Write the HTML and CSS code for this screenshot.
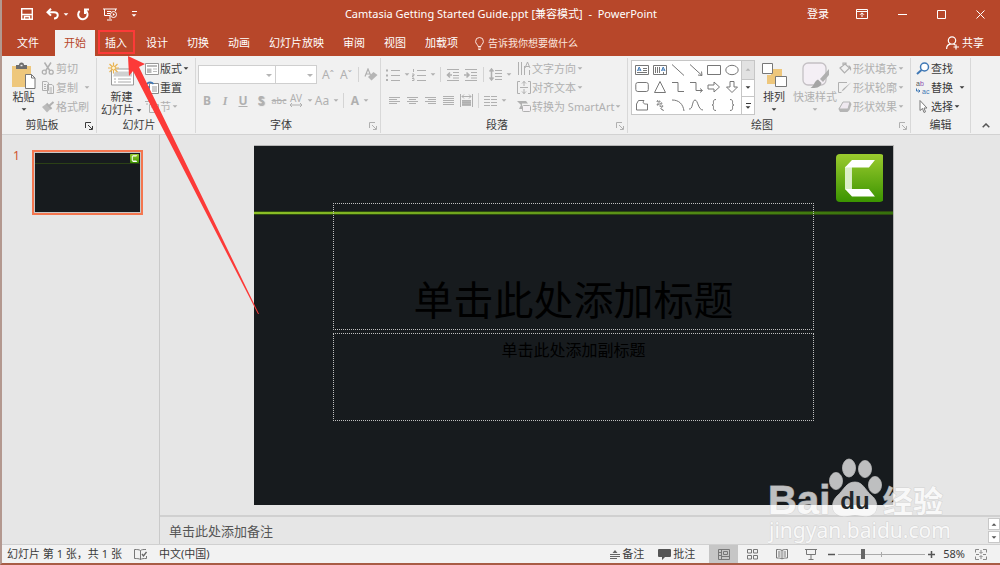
FILE: index.html
```html
<!DOCTYPE html>
<html lang="zh-CN">
<head>
<meta charset="utf-8">
<meta name="viewport" content="width=device-width, initial-scale=1">
<title>Camtasia Getting Started Guide.ppt - PowerPoint</title>
<link rel="stylesheet" href="styles.css">
</head>
<body>
<svg class="defs" aria-hidden="true">
  <defs>
    <linearGradient id="green" x1="0" y1="0" x2="0" y2="1"><stop offset="0" stop-color="#9bcb2e"/><stop offset="1" stop-color="#3b9400"/></linearGradient>
    <symbol id="launcher" viewBox="0 0 8 8"><path d="M.5 6V.5H6M3 3l4 4M7.500 4v3.500H4" fill="none" stroke="currentColor"/></symbol>
    <symbol id="camtasia" viewBox="0 0 48 48"><rect width="48" height="48" rx="4" fill="url(#green)"/><path d="M9 13l7-3v28l-7-3z" fill="#dcefc8"/><path d="M16 6h23l-6 7.500H9zM9 35h24l6 7.500H16z" fill="#fff"/></symbol>
  </defs>
</svg>
<div class="app">
  <header class="titlebar">
    <div class="qat">
      <button class="qbtn" aria-label="保存"><svg width="12" height="12" viewBox="0 0 12 12"><path d="M.7.7h10.600v10.600H.7zM.7 6.500h10.600M3.500 11V8.500h5V11" fill="none" stroke="#fff" stroke-width="1.400"/></svg></button>
      <button class="qbtn undo" aria-label="撤消"><svg width="14" height="12" viewBox="0 0 14 12"><path d="M5 .8L1.500 4.200 5 7.600M2 4.200h6c5 0 5 6.300 0 6.300" fill="none" stroke="#fff" stroke-width="2"/></svg><i class="caret"></i></button>
      <button class="qbtn" aria-label="重复"><svg width="14" height="13" viewBox="0 0 14 13"><path d="M3.700 3A4.700 4.700 0 1 0 9.500 2.600M9 6V1.500h4" fill="none" stroke="#fff" stroke-width="2"/></svg></button>
      <button class="qbtn" aria-label="从头开始"><svg width="15" height="13" viewBox="0 0 15 13"><path d="M0 1h14M1.500 1v6.500H7M12.500 1v2M7 8v3M4 12h5M4 3.500h4M4 5.500h3" fill="none" stroke="#fff"/><circle cx="10.500" cy="6.500" r="3" fill="none" stroke="#fff"/><path d="M9.800 5l2.200 1.500L9.800 8z" fill="#fff"/></svg></button>
      <button class="qbtn more" aria-label="自定义快速访问工具栏"><i class="bar"></i><i class="caret"></i></button>
    </div>
    <h1 class="title">Camtasia Getting Started Guide.ppt [兼容模式]&nbsp; -&nbsp; PowerPoint</h1>
    <div class="winctl">
      <button class="signin">登录</button>
      <button aria-label="功能区显示选项"><svg width="12" height="10" viewBox="0 0 12 10"><path d="M.5.5h11v9H.5zM.5 2.500h11M6 8V4M4 5.800l2-2 2 2" fill="none" stroke="#fff"/></svg></button>
      <button aria-label="最小化"><svg width="9" height="9" viewBox="0 0 9 9"><path d="M0 4.500h9" stroke="#fff"/></svg></button>
      <button aria-label="最大化"><svg width="9" height="9" viewBox="0 0 9 9"><path d="M.5.5h8v8h-8z" fill="none" stroke="#fff"/></svg></button>
      <button aria-label="关闭"><svg width="9" height="9" viewBox="0 0 9 9"><path d="M.5.5l8 8M8.500.5l-8 8" stroke="#fff"/></svg></button>
    </div>
  </header>

  <nav class="tabs">
    <button class="tab file">文件</button>
    <button class="tab active">开始</button>
    <button class="tab marked">插入</button>
    <button class="tab">设计</button>
    <button class="tab">切换</button>
    <button class="tab">动画</button>
    <button class="tab">幻灯片放映</button>
    <button class="tab">审阅</button>
    <button class="tab">视图</button>
    <button class="tab">加载项</button>
    <button class="tell"><svg width="9" height="13" viewBox="0 0 9 13"><path d="M3 9.500C3 7.500.6 7 .6 4.400a3.900 3.900 0 0 1 7.800 0C8.400 7 6 7.500 6 9.500zM3 11h3M3.300 12.500h2.400" fill="none" stroke="#fbe5df"/></svg>告诉我你想要做什么</button>
    <button class="share"><svg width="13" height="14" viewBox="0 0 13 14"><circle cx="6" cy="4.500" r="3.700" fill="none" stroke="#fff" stroke-width="1.200"/><path d="M.6 13c0-3 1.800-4.700 4-4.900M7.500 8.200c.8.200 1.200.4 1.700.9M10 8.500v5M7.500 11H13" fill="none" stroke="#fff" stroke-width="1.200"/></svg>共享</button>
  </nav>

  <section class="ribbon">
    <div class="group clip">
      <div class="body">
        <button class="big"><svg width="25" height="27" viewBox="0 0 25 27"><path d="M1 4h19v21H1z" fill="#eec77c"/><path d="M5 3h3a2.500 2.500 0 0 1 5 0h3v4H5z" fill="#6d6d6d"/><path d="M9.500 3.500h2" stroke="#eee" stroke-width="1.500"/><path d="M14.500 12.500h6l3.500 3.500v10.500h-9.500z" fill="#fff" stroke="#777"/><path d="M20.500 12.500V16H24" fill="none" stroke="#777"/></svg><span>粘贴</span><i class="caret"></i></button>
        <div class="stack off">
          <button class="cmd"><svg width="14" height="13" viewBox="0 0 14 13"><path d="M3.500.5L9 9M10 .5L4.500 9" fill="none" stroke="currentColor" stroke-width="1.500"/><circle cx="3.300" cy="10.200" r="2" fill="none" stroke="currentColor" stroke-width="1.300"/><circle cx="10.200" cy="10.200" r="2" fill="none" stroke="currentColor" stroke-width="1.300"/></svg>剪切</button>
          <button class="cmd"><svg width="14" height="13" viewBox="0 0 14 13"><path d="M1.500.5H6L7.500 2v7.500h-6zM6.500 3.500H11L12.500 5v7.500h-6z" fill="#f1f1f1" stroke="currentColor"/><path d="M3 3.500h2M3 5.500h2M3 7.500h2M8.500 7h2.500M8.500 9h2.500M8.500 11h2.500" stroke="currentColor"/></svg>复制<i class="caret far"></i></button>
          <button class="cmd"><svg width="14" height="13" viewBox="0 0 14 13"><path d="M1 7l4-3 4.500 5L6 12.500z" fill="#bbb"/><path d="M5.500 3.500l5 5.500M8 6l4.500-4" stroke="currentColor" stroke-width="2"/></svg>格式刷</button>
        </div>
      </div>
      <div class="label">剪贴板<button class="launch" aria-label="剪贴板选项"><svg width="8" height="8"><use href="#launcher"/></svg></button></div>
    </div>

    <div class="group slides">
      <div class="body">
        <button class="big two"><svg width="27" height="26" viewBox="0 0 27 26"><path d="M3.500 6.500h22v16h-22z" fill="#fff" stroke="#999"/><path d="M7 9h17v5H5z" fill="#d0d0d0"/><path d="M6 16.500h2M10 16.500h13M6 19.500h2M10 19.500h13" stroke="#aaa"/><path d="M5.500 0v11M0 5.500h11M1.500 1.500l8 8M9.500 1.500l-8 8" stroke="#e9b452" stroke-width="1.200"/><circle cx="5.500" cy="5.500" r="2" fill="#fff3d0" stroke="#e9b452"/></svg><span>新建</span><span>幻灯片<i class="caret"></i></span></button>
        <div class="stack">
          <button class="cmd"><svg width="14" height="12" viewBox="0 0 14 12"><path d="M.5.5h13v11H.5z" fill="#fff" stroke="#999"/><path d="M2 2h10v2H2zM2 5.500h4.500V10H2zM8 5.500h4v1H8zM8 8h4v1H8z" fill="#bbb"/></svg>版式<i class="caret"></i></button>
          <button class="cmd"><svg width="14" height="13" viewBox="0 0 14 13"><path d="M4.500 2.500h9v10h-9z" fill="#fff" stroke="#888"/><path d="M7 6h5M7 8h5M7 10h5" stroke="#999"/><path d="M1 6C1 1.500 6-.5 8.500 3M1 2v4h4" fill="none" stroke="#3a76b8" stroke-width="1.400"/></svg>重置</button>
          <button class="cmd dim"><svg width="14" height="13" viewBox="0 0 14 13"><path d="M0 1.500h8M4.500 4.500h9v8h-9zM6 7h6M1 4h2" fill="none" stroke="currentColor"/></svg>节<i class="caret"></i></button>
        </div>
      </div>
      <div class="label">幻灯片</div>
    </div>

    <div class="group font">
      <div class="body rows off">
        <div class="row">
          <span class="combo name"><select aria-label="字体"><option></option></select></span><span class="combo size"><select aria-label="字号"><option></option></select></span>
          <button class="tool grow" aria-label="增大字号">A<sup>ˆ</sup></button>
          <button class="tool grow" aria-label="减小字号">A<sup>ˇ</sup></button>
          <i class="sep"></i>
          <button class="tool clear" aria-label="清除格式"><svg width="14" height="14" viewBox="0 0 14 14"><path d="M1 8.500L4 1l2.500 6M2 6h4" fill="none" stroke="currentColor" stroke-width="1.200"/><path d="M9.500 4l4 3-6 5.500L4 9z" fill="#b5b5b5"/></svg></button>
        </div>
        <div class="row">
          <button class="tool b">B</button><button class="tool it">I</button><button class="tool u">U</button><button class="tool sh">S</button><button class="tool st">abc</button>
          <button class="tool w"><span class="av">AV<svg width="14" height="4" viewBox="0 0 14 4"><path d="M1 2h12M3 0L1 2l2 2M11 0l2 2-2 2" fill="none" stroke="currentColor"/></svg></span><i class="caret"></i></button>
          <button class="tool w">Aa<i class="caret"></i></button>
          <i class="sep"></i>
          <button class="tool w col">A<i class="caret"></i></button>
        </div>
      </div>
      <div class="label">字体<button class="launch off" aria-label="字体选项"><svg width="8" height="8"><use href="#launcher"/></svg></button></div>
    </div>

    <div class="group para">
      <div class="body off">
        <div class="rows">
          <div class="row">
            <button class="tool w" aria-label="项目符号"><svg width="14" height="12" viewBox="0 0 14 12"><path d="M5 1.500h9M5 6.500h9M5 11.500h9" stroke="currentColor"/><path d="M0 .5h2v2H0zM0 5.500h2v2H0zM0 10h2v2H0z" fill="currentColor"/></svg><i class="caret"></i></button>
            <button class="tool w" aria-label="编号"><svg width="14" height="12" viewBox="0 0 14 12"><path d="M5 1.500h9M5 6.500h9M5 11.500h9M1.500 0v3M0 5h2v1.500H.5V8H2M0 9.500h2v2H0" fill="none" stroke="currentColor"/></svg><i class="caret"></i></button>
            <i class="sep"></i>
            <button class="tool" aria-label="减少缩进"><svg width="14" height="12" viewBox="0 0 14 12"><path d="M1 .5h12M7 3.500h6M7 6.500h6M7 9h6M1 11.500h12" stroke="currentColor"/><path d="M6 6H1.500M4 3.500L1.500 6 4 8.500" fill="none" stroke="currentColor" stroke-width="1.600"/></svg></button>
            <button class="tool" aria-label="增加缩进"><svg width="14" height="12" viewBox="0 0 14 12"><path d="M1 .5h12M7 3.500h6M7 6.500h6M7 9h6M1 11.500h12" stroke="currentColor"/><path d="M0 6h4.500M2.500 3.500L5 6 2.500 8.500" fill="none" stroke="currentColor" stroke-width="1.600"/></svg></button>
            <i class="sep"></i>
            <button class="tool w" aria-label="行距"><svg width="13" height="13" viewBox="0 0 13 13"><path d="M6 2.500h7M6 5.500h7M6 8.500h7M6 11.500h7" stroke="currentColor"/><path d="M2.500 1v11M.5 3.500l2-2.500 2 2.500M.5 9.500l2 2.500 2-2.500" fill="none" stroke="currentColor" stroke-width="1.500"/></svg><i class="caret"></i></button>
          </div>
          <div class="row">
            <button class="tool" aria-label="左对齐"><svg width="11" height="9" viewBox="0 0 11 9"><path d="M0 1.500h11M0 3.500h8M0 5.500h11M0 7.500h8" stroke="currentColor"/></svg></button>
            <button class="tool" aria-label="居中"><svg width="11" height="9" viewBox="0 0 11 9"><path d="M0 1.500h11M2 3.500h7M0 5.500h11M2 7.500h7" stroke="currentColor"/></svg></button>
            <button class="tool" aria-label="右对齐"><svg width="11" height="9" viewBox="0 0 11 9"><path d="M0 1.500h11M3 3.500h8M0 5.500h11M3 7.500h8" stroke="currentColor"/></svg></button>
            <button class="tool" aria-label="两端对齐"><svg width="11" height="10" viewBox="0 0 11 10"><path d="M0 .5h11M0 2.500h11M0 4.500h11M0 6.500h11M0 8.500h11" stroke="currentColor"/></svg></button>
            <button class="tool" aria-label="分散对齐"><svg width="13" height="13" viewBox="0 0 13 13"><path d="M.5 0v13M12.500 0v13M2 2.500h9M4 .5l-2 2 2 2M9 .5l2 2-2 2" fill="none" stroke="currentColor"/><path d="M2 6h9v6H2z" fill="#b9b9b9"/><path d="M2 6.500h9M2 8.500h9M2 10.500h9" stroke="currentColor"/></svg></button>
            <i class="sep"></i>
            <button class="tool w" aria-label="分栏"><svg width="13" height="10" viewBox="0 0 13 10"><path d="M0 .5h6M0 3.500h6M0 6.500h6M0 9.500h6M7 .5h6M7 3.500h6M7 6.500h6M7 9.500h6" stroke="currentColor"/></svg><i class="caret"></i></button>
          </div>
        </div>
        <div class="stack">
          <button class="cmd"><svg width="14" height="13" viewBox="0 0 14 13"><path d="M1.500 0v13M4.500 0v13M7.500 4v9M12.500 8v5M8 6l2.500-6L13 6M9 4.500h3" fill="none" stroke="currentColor"/></svg>文字方向<i class="caret"></i></button>
          <button class="cmd"><svg width="14" height="13" viewBox="0 0 14 13"><path d="M3 .5H.5v12H3M11 .5h2.500v12H11M3 6.500h8" fill="none" stroke="currentColor"/><path d="M7 0v5M5 2.500L7 .5l2 2M7 8v5M5 10.500l2 2 2-2" fill="none" stroke="currentColor"/></svg>对齐文本<i class="caret"></i></button>
          <button class="cmd"><svg width="14" height="13" viewBox="0 0 14 13"><path d="M0 1h9l2 2.500H5V9H2L4 5z" fill="#b0b0b0"/><rect x="5.500" y="5.500" width="8" height="6" rx="1" fill="#f4f1f4" stroke="currentColor"/></svg>转换为 SmartArt<i class="caret"></i></button>
        </div>
      </div>
      <div class="label">段落<button class="launch off" aria-label="段落选项"><svg width="8" height="8"><use href="#launcher"/></svg></button></div>
    </div>

    <div class="group draw">
      <div class="body">
        <div class="gallery">
          <div class="shapes">
            <button aria-label="文本框"><svg viewBox="0 0 14 12"><path d="M.5 1.500h13v9H.5zM8 4.500h4M8 6.500h4M2 8.500h10"/><path d="M2.500 7l1.700-4L6 7M3 6h2.500" class="blue"/></svg></button>
            <button aria-label="竖排文本框"><svg viewBox="0 0 14 12"><path d="M.5 1.500h13v9H.5zM2.500 3v6M4.500 3v6M6.500 3v6M10.500 8v2"/><path d="M8.500 7l1.700-4L12 7M9 6h2.500" class="blue"/></svg></button>
            <button aria-label="直线"><svg viewBox="0 0 14 12"><path d="M1 .5l12 11"/></svg></button>
            <button aria-label="箭头"><svg viewBox="0 0 14 12"><path d="M1 .5l12 11M9 11l4 .5-.5-4"/></svg></button>
            <button aria-label="矩形"><svg viewBox="0 0 14 12"><path d="M.5 1.500h13v9H.5z"/></svg></button>
            <button aria-label="椭圆"><svg viewBox="0 0 14 12"><ellipse cx="7" cy="6" rx="6.200" ry="4.700"/></svg></button>
            <button aria-label="圆角矩形"><svg viewBox="0 0 14 12"><rect x=".8" y="1.500" width="12.500" height="9" rx="2"/></svg></button>
            <button aria-label="三角形"><svg viewBox="0 0 14 12"><path d="M7 .5l5.500 11h-11z"/></svg></button>
            <button aria-label="肘形连接符"><svg viewBox="0 0 14 12"><path d="M1 1.500h6v9h6"/></svg></button>
            <button aria-label="肘形箭头"><svg viewBox="0 0 14 12"><path d="M1 1.500h6v8h6M11 7.500l2.500 2-2.500 2"/></svg></button>
            <button aria-label="右箭头"><svg viewBox="0 0 14 12"><path d="M1 4h6V1l5.500 5L7 11V8H1z"/></svg></button>
            <button aria-label="下箭头"><svg viewBox="0 0 14 12"><path d="M5 .5h4V6h3.500L7 11.500 1.500 6H5z"/></svg></button>
            <button aria-label="任意多边形"><svg viewBox="0 0 14 12"><path d="M1.500 5l2-3.500H9C7 4 9 5.500 12.500 5v6h-11z"/></svg></button>
            <button aria-label="自由曲线"><svg viewBox="0 0 14 12"><path d="M5 1c-3 3 1 1 2 1S4 5 4 6s5-3 5-2-3 3-2 3.500S10 6 10 7s-3 2-2 3 3 0 2 2"/></svg></button>
            <button aria-label="弧形"><svg viewBox="0 0 14 12"><path d="M1 1c7 0 11 4 12 11"/></svg></button>
            <button aria-label="曲线"><svg viewBox="0 0 14 12"><path d="M0 10C4 11 3 1 6 1s3 10 8 10"/></svg></button>
            <button aria-label="左大括号"><svg viewBox="0 0 14 12"><path d="M9 .5C4 .5 8.500 6 5 6c3.500 0-1 5.500 4 5.500"/></svg></button>
            <button aria-label="右大括号"><svg viewBox="0 0 14 12"><path d="M5 .5C10 .5 5.500 6 9 6c-3.500 0 1 5.500-4 5.500"/></svg></button>
          </div>
          <div class="spin">
            <button class="mute" aria-label="上一行"><i class="caret up"></i></button>
            <button aria-label="下一行"><i class="caret"></i></button>
            <button aria-label="其他"><i class="bar"></i><i class="caret"></i></button>
          </div>
        </div>
        <button class="big arrange"><svg width="25" height="25" viewBox="0 0 25 25"><path d="M9 6h11v10H9zM5 12h10v9H5z" fill="#eec77c"/><path d="M.5.5h10v10H.5zM13.500 13.500h11v10h-11z" fill="#fff" stroke="#777"/></svg><span>排列</span><i class="caret"></i></button>
        <button class="big quick dim"><svg width="27" height="27" viewBox="0 0 27 27"><rect x="1" y="1" width="23" height="22" rx="5" fill="#f4eff5" stroke="#c4c0c4" stroke-width="1.300"/><path d="M27 7v6l-6 7-3-3z" fill="#b0b0b0"/><path d="M16 17.500l3.500 3.500c-1 5-6 5-11 5 4-2 3.500-7 7.500-8.500z" fill="#a5a5a5"/></svg><span>快速样式</span><i class="caret"></i></button>
        <div class="stack off">
          <button class="cmd"><svg width="14" height="13" viewBox="0 0 14 13"><path d="M2 6l5-4 4.500 4-5 5zM5 4V1h3v2" fill="none" stroke="currentColor" stroke-width="1.200"/><path d="M10.500 3C13 4 13.500 6 13 9L11 6z" fill="currentColor"/></svg>形状填充<i class="caret"></i></button>
          <button class="cmd"><svg width="14" height="13" viewBox="0 0 14 13"><path d="M9 1.500H.5v10h3" fill="none" stroke="currentColor"/><path d="M13.500 1L6 9l-2.500 1.500L5 8z" fill="currentColor"/></svg>形状轮廓<i class="caret"></i></button>
          <button class="cmd"><svg width="14" height="13" viewBox="0 0 14 13"><path d="M5 2h7l1.500 2-2 6-2 2H2L.5 9z" fill="#b5b5b5"/><path d="M5 2h7L10 9H1z" fill="#efe9f0" stroke="#b5b5b5"/></svg>形状效果<i class="caret"></i></button>
        </div>
      </div>
      <div class="label">绘图<button class="launch off" aria-label="绘图选项"><svg width="8" height="8"><use href="#launcher"/></svg></button></div>
    </div>

    <div class="group edit">
      <div class="body">
        <div class="stack">
          <button class="cmd"><svg width="14" height="13" viewBox="0 0 14 13"><circle cx="8.500" cy="5" r="4" fill="#fff" stroke="#3f78b5" stroke-width="1.500"/><path d="M5.500 8L1 12" stroke="#3f78b5" stroke-width="2"/></svg>查找</button>
          <button class="cmd"><svg class="swap" width="14" height="13" viewBox="0 0 14 13"><text x="0" y="5" fill="#555">a<tspan fill="#8c4fb0">b</tspan></text><text x="6" y="13" fill="#3f78b5">ac</text><path d="M.5 7.500v2.500H4M2.500 8.500L4 10l-1.500 1.500" fill="none" stroke="#3f78b5"/></svg>替换<i class="caret far"></i></button>
          <button class="cmd"><svg width="14" height="13" viewBox="0 0 14 13"><path d="M4 .5v10l2.500-2 1.500 4 1.500-.7L8 8h3z" fill="#fff" stroke="#777"/></svg>选择<i class="caret"></i></button>
        </div>
      </div>
      <div class="label">编辑</div>
    </div>
    <button class="collapse" aria-label="折叠功能区"><svg width="8" height="5" viewBox="0 0 8 5"><path d="M.7 4.300L4 1l3.300 3.300" fill="none" stroke="#555" stroke-width="1.500"/></svg></button>
  </section>

  <main class="work">
    <aside class="thumbs">
      <span class="num">1</span>
      <button class="thumb" aria-label="幻灯片 1"><svg width="9" height="9"><use href="#camtasia"/></svg></button>
    </aside>
    <section class="editor">
      <div class="stage">
        <article class="slide">
          <i class="rule"></i>
          <svg class="logo" viewBox="0 0 48 48"><use href="#camtasia"/></svg>
          <div class="ph head">单击此处添加标题</div>
          <div class="ph sub">单击此处添加副标题</div>
        </article>
      </div>
      <div class="notes"><span>单击此处添加备注</span>
        <div class="nspin"><button aria-label="向上"><i class="caret up"></i></button><button aria-label="向下"><i class="caret"></i></button></div>
      </div>
    </section>
  </main>

  <footer class="status">
    <span>幻灯片 第 1 张，共 1 张</span>
    <button class="lang" aria-label="拼写检查"><svg width="13" height="11" viewBox="0 0 13 11"><path d="M6.500 1.500C5 .5 3 .5.500.5v9c2.500 0 4.500 0 6 1V1.500C8 .5 9 .5 12 .5M6.500 10.500c1.500-1 3-1 6-1V7" fill="none" stroke="#777"/><path d="M8 5l1.500 2L12.500 3" fill="none" stroke="#666" stroke-width="1.300"/></svg></button>
    <span>中文(中国)</span>
    <div class="right">
      <button class="sbtn"><svg width="10" height="9" viewBox="0 0 10 9"><path d="M5 0l2.500 3h-5zM0 4h10v1H0zM0 6h10v1H0zM0 8h7v1H0z" fill="#666"/></svg>备注</button>
      <button class="sbtn"><svg width="13" height="11" viewBox="0 0 13 11"><path d="M1 0h11q1 0 1 1v6q0 1-1 1H7l-3 3V8H1Q0 8 0 7V1q0-1 1-1z" fill="#555"/></svg>批注</button>
      <div class="views">
        <button class="on" aria-label="普通视图"><svg width="12" height="11" viewBox="0 0 12 11"><path d="M.5.5h11v10H.5zM3.500.5v10M5.500 2.500h4v3h-4zM3.500 7.500h8M1 3.500h2M1 6.500h2" fill="none" stroke="#777"/></svg></button>
        <button aria-label="幻灯片浏览"><svg width="11" height="11" viewBox="0 0 11 11"><path d="M.5.5h4v3.500h-4zM6.500.5h4v3.500h-4zM.5 6.500h4V10h-4zM6.500 6.500h4V10h-4z" fill="none" stroke="#777"/></svg></button>
        <button aria-label="阅读视图"><svg width="12" height="11" viewBox="0 0 12 11"><path d="M6 1.500C5 .5 3 .5.500.5v8.500c2.500 0 4.500 0 5.500 1 1-1 3-1 5.500-1V.5C9 .5 7 .5 6 1.500zM6 1v9M2 3h2.500M2 5h2.500M2 7h2.500M7.500 3H10M7.500 5H10M7.500 7H10" fill="none" stroke="#777"/></svg></button>
        <button aria-label="幻灯片放映"><svg width="12" height="11" viewBox="0 0 12 11"><path d="M0 .5h12M1.500.5v5h9v-5M6 6v4M3.500 10.500h5" fill="none" stroke="#777"/></svg></button>
      </div>
      <button class="zoom" aria-label="缩小"><svg width="7" height="7" viewBox="0 0 7 7"><path d="M0 3.500h7" stroke="#555" stroke-width="1.500"/></svg></button>
      <input class="range" type="range" min="0" max="100" value="27" aria-label="缩放">
      <button class="zoom" aria-label="放大"><svg width="7" height="7" viewBox="0 0 7 7"><path d="M0 3.500h7M3.500 0v7" stroke="#555" stroke-width="1.500"/></svg></button>
      <span class="pct">58%</span>
      <button class="zoom" aria-label="适应窗口"><svg width="12" height="11" viewBox="0 0 12 11"><path d="M.5 3.500v-3h3.500M8 .5h3.500v3M11.500 7.500v3H8M4 10.500H.5v-3M6 1v3M6 7v3M1 5.500h3M8 5.500h3M4.500 3L6 4.500 7.500 3M4.500 8L6 6.500 7.500 8" fill="none" stroke="#888"/></svg></button>
    </div>
  </footer>

  <svg class="arrow" width="270" height="320" viewBox="0 0 270 320" aria-hidden="true"><path d="M128 56l1 20 4-5 125 243h1L139 67l6-3z" fill="#fc3a38"/></svg>
  <svg class="mark" width="182" height="92" viewBox="0 0 182 92">
    <g class="ink">
      <text class="bai" x="0" y="56">Bai</text>
      <ellipse cx="68" cy="23" rx="6.500" ry="8.500"/><ellipse cx="81" cy="10" rx="6.500" ry="9"/><ellipse cx="97" cy="11" rx="6.500" ry="8.500"/><ellipse cx="107" cy="27" rx="6.500" ry="8.500"/>
      <path d="M87 24c8 0 10 8 17 14 7 5 7 19-4 20-5 1-8-1-13-1s-8 2-13 1c-11-1-12-13-5-20 7-6 9-14 18-14z"/>
      <text class="jy" x="115" y="54">经验</text>
      <text class="url" x="1" y="80">jingyan.baidu.com</text>
    </g>
    <text class="du" x="87" y="51">du</text>
  </svg>
</div>
</body>
</html>
```
FILE: styles.css
```css
* { box-sizing: border-box; }
body {
  margin: 0;
  font-family: "Noto Sans", "Noto Sans CJK SC", sans-serif;
  font-size: 11px;
  line-height: 14px;
  color: #3b3b3b;
}
button, select {
  font: inherit;
  color: inherit;
  background: none;
  border: 0;
  padding: 0;
  white-space: nowrap;
}
svg { flex: none; }
.defs { position: absolute; width: 0; height: 0; }
.app {
  position: relative;
  height: 100vh;
  display: flex;
  flex-direction: column;
  background: #e6e6e6;
  border-left: 2px solid #b3988f;
  border-bottom: 2px solid #a85c45;
  overflow: hidden;
}

.caret {
  display: inline-block;
  border: 3px solid transparent;
  border-top-color: currentColor;
  border-bottom: 0;
  transform: scale(.8);
  flex: none;
}
.caret.up { border-top: 0; border-bottom: 3px solid currentColor; }
.bar { display: block; width: 5px; height: 1px; background: currentColor; }
.off, .dim { color: #b0b0b0; }

/* title bar */
.titlebar {
  display: grid;
  grid-template-columns: 1fr auto 1fr;
  align-items: center;
  height: 28px;
  background: #b7472a;
  color: #fff;
}
.qat { display: flex; align-items: center; gap: 13px; padding-left: 19px; }
.qbtn { display: flex; align-items: center; gap: 4px; }
.qbtn.undo { gap: 3px; margin-right: -6px; }
.qbtn.more { flex-direction: column; gap: 2px; }
.title { margin: 0; font-size: 11px; font-weight: 400; white-space: nowrap; }
.winctl { display: grid; grid-template-columns: 48px 40px 40px 38px 40px; justify-content: end; justify-items: center; }
.winctl button { display: flex; align-items: center; }

/* tabs */
.tabs {
  display: flex;
  align-items: stretch;
  height: 28px;
  padding: 2px 16px 0 0;
  gap: 1px;
  background: #b7472a;
  color: #fff;
}
.tab { position: relative; padding: 0 9px; }
.tab.file { padding: 0 15px; }
.tab.active { background: #f1f1f1; color: #b7472a; }
.tab.marked::after {
  content: "";
  position: absolute;
  inset: 0 1px 2px 2px;
  border: 2px solid #fc3a38;
}
.tell { display: flex; align-items: center; gap: 4px; margin-left: 7px; color: #fbe5df; font-size: 10px; }
.share { display: flex; align-items: center; gap: 3px; margin-left: auto; }

/* ribbon */
.ribbon {
  display: grid;
  grid-template-columns: 95fr 99fr 185fr 247fr 283fr 60fr 29fr;
  height: 79px;
  background: #f1f1f1;
  border-bottom: 1px solid #d2d2d2;
}
.group {
  display: flex;
  flex-direction: column;
  margin: 2px 0 1px;
  border-right: 1px solid #d8d8d8;
}
.body { display: flex; flex: 1; padding-top: 1px; }
.label { position: relative; height: 17px; line-height: 17px; text-align: center; padding-right: 14px; }
.edit .label { padding-right: 0; }
.launch { position: absolute; right: 3px; bottom: 3px; line-height: 0; }
.stack { display: grid; grid-template-rows: repeat(3, 19px); justify-items: start; align-content: start; }
.cmd { display: flex; align-items: center; gap: 1px; }
.far { margin-left: 5px; }
.big {
  display: flex;
  flex-direction: column;
  align-items: center;
  align-self: flex-start;
  padding-top: 3px;
}
.big span { line-height: 13px; }
.big svg { height: 27px; margin-bottom: 1px; }
.big > .caret { margin-top: 5px; }
.big span .caret { margin: 0 0 2px 2px; }
.clip .body { padding-left: 9px; gap: 5px; }
.slides .body { padding-left: 4px; gap: 3px; }
.rows { display: flex; flex-direction: column; gap: 7px; }
.row { display: flex; align-items: center; height: 19px; }
.font .body { flex-direction: column; padding: 7px 0 0 2px; }
.tool { display: flex; align-items: center; justify-content: center; width: 18px; height: 19px; font-size: 12px; }
.tool.w { width: 26px; gap: 4px; }
.sep { width: 1px; height: 15px; margin: 0 3px; background: #d4d4d4; }
.combo { position: relative; height: 19px; border: 1px solid #cfcfcf; background: #fff; }
.combo + .combo { margin-left: -1px; }
.combo.name { width: 78px; }
.combo.size { width: 42px; margin-right: 2px; }
.combo select { appearance: none; width: 100%; height: 100%; }
.combo::after {
  content: "";
  position: absolute;
  right: 3px;
  top: 8px;
  border: 3px solid transparent;
  border-top-color: #b5b5b5;
  border-bottom: 0;
}
.grow sup { font-size: 10px; line-height: 10px; }
.b { font-weight: 700; }
.it { font-family: "Liberation Serif", serif; font-style: italic; font-weight: 700; }
.u { font-weight: 700; text-decoration: underline; }
.sh { font-weight: 700; text-shadow: 1px 1px 1px #aaa; }
.st { font-size: 9px; text-decoration: line-through; }
.av { display: flex; flex-direction: column; align-items: center; font-size: 10px; line-height: 9px; }
.col { font-weight: 700; }
.para .body { gap: 2px; padding-left: 4px; }
.para .rows { width: 130px; padding-top: 6px; }

/* drawing group */
.draw .body { padding-left: 3px; }
.gallery { display: flex; align-self: flex-start; height: 55px; margin-top: 1px; border: 1px solid #c6c6c6; background: #fff; }
.shapes { display: grid; grid-template-columns: repeat(6, 18px); align-items: center; padding-left: 1px; }
.shapes button { display: flex; justify-content: center; }
.shapes svg { width: 14px; height: 12px; fill: none; stroke: #777; }
.shapes .blue { stroke: #3f78b5; }
.spin { display: grid; grid-template-rows: repeat(3, 1fr); width: 13px; border-left: 1px solid #c6c6c6; }
.spin button { display: flex; flex-direction: column; align-items: center; justify-content: center; gap: 2px; }
.spin button + button { border-top: 1px solid #c6c6c6; }
.mute { background: #e2e2e2; color: #b5b5b5; }
.arrange { width: 38px; }
.quick { width: 44px; }
.draw .stack { margin-left: 1px; }
.edit .body { padding-left: 5px; }
.swap { font: 7px/8px "Liberation Sans", sans-serif; overflow: visible; }
.collapse { align-self: end; padding-bottom: 6px; line-height: 0; }

/* work area */
.work { flex: 1; display: flex; min-height: 0; }
.thumbs { display: flex; align-items: flex-start; gap: 12px; width: 158px; padding: 15px 0 0 11px; border-right: 1px solid #cacaca; }
.num { font-size: 12px; line-height: 12px; color: #d0542f; }
.thumb {
  display: flex;
  justify-content: flex-end;
  align-items: flex-start;
  width: 111px;
  aspect-ratio: 111 / 65;
  padding: 2px;
  border: 2px solid #f4764f;
  box-shadow: inset 0 0 0 1px #c8c8c8;
  background: linear-gradient(#2b4016, #2b4016) 0 11px / 100% 1px no-repeat #171b1e;
}
.editor { flex: 1; display: flex; flex-direction: column; min-width: 0; }
.stage { flex: 1; display: flex; justify-content: flex-end; align-items: flex-start; min-height: 0; padding: 10px 106px 0 94px; }
.slide { position: relative; flex: 1; aspect-ratio: 16 / 9; background: #171b1e; border-top: 1px solid #b5b5b5; border-right: 1px solid #b5b5b5; }
.rule { position: absolute; left: 0; right: 0; top: 18%; height: 4px; background: linear-gradient(90deg, #8cbf26, #35700c); border: solid #2d4a10; border-width: 1px 0; }
.logo { position: absolute; width: 7.5%; right: 1.5%; top: 2.3%; }
.ph {
  position: absolute;
  left: 12.3%;
  width: 75.4%;
  display: flex;
  justify-content: center;
  border: 1px dotted #c0c0c0;
  color: #000;
  font-family: "Noto Sans CJK SC", sans-serif;
}
.head { top: 16%; height: 35.3%; align-items: flex-end; font-size: 40px; line-height: 62px; }
.sub { top: 52%; height: 24.7%; font-size: 16px; line-height: 30px; }
.notes { position: relative; display: flex; align-items: center; justify-content: space-between; height: 29px; padding-left: 9px; border-top: 2px solid #d0d0d0; color: #555; font-size: 13px; }
.nspin { display: grid; gap: 1px; }
.nspin button { display: flex; align-items: center; justify-content: center; width: 12px; height: 12px; background: #fff; border: 1px solid #c8c8c8; }

/* status bar */
.status { display: flex; align-items: center; gap: 12px; height: 19px; padding: 0 10px 0 5px; background: #f2f2f2; border-top: 1px solid #d0d0d0; white-space: nowrap; }
.status button { display: flex; align-items: center; gap: 2px; }
.right { display: flex; align-items: center; margin-left: auto; align-self: stretch; }
.sbtn { margin-right: 14px; }
.views { display: flex; align-self: stretch; }
.status .views button { width: 29px; justify-content: center; }
.views .on { background: #c6c6c6; }
.zoom { margin: 0 3px; }
.range {
  appearance: none;
  width: 87px;
  height: 11px;
  margin: 0;
  background:
    linear-gradient(#aaa, #aaa) center / 1px 5px no-repeat,
    linear-gradient(#aaa, #aaa) center / 100% 1px no-repeat;
}
.range::-webkit-slider-thumb { appearance: none; width: 4px; height: 10px; background: #666; }
.pct { margin: 0 7px 0 5px; }

/* overlays */
.arrow { position: absolute; left: -2px; top: 0; pointer-events: none; }
.mark { position: absolute; right: 50px; bottom: 13px; pointer-events: none; }
.ink { fill: #fff; stroke: #ccc; stroke-width: 1px; paint-order: stroke; opacity: .72; }
.bai { font: 700 40px "Liberation Sans", sans-serif; }
.jy { font: 700 30px "Noto Sans CJK SC", sans-serif; }
.url { font: 21px "Noto Sans", sans-serif; }
.du { font: 700 24px "Liberation Sans", sans-serif; text-anchor: middle; fill: #22272a; }
```
